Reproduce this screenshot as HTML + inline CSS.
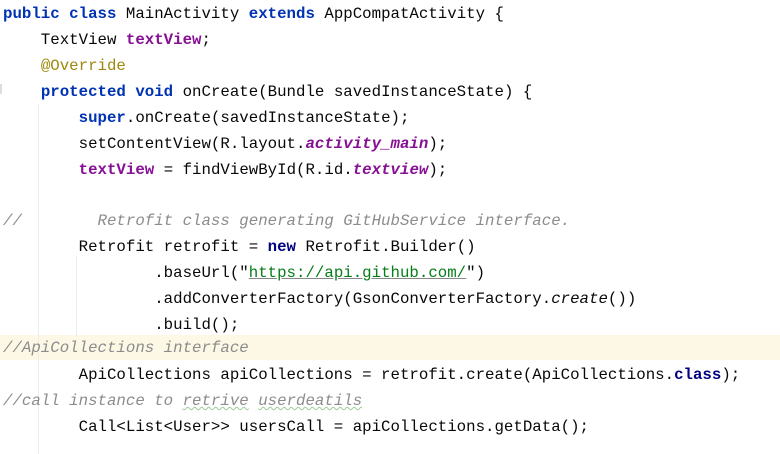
<!DOCTYPE html>
<html><head><style>
body{margin:0;width:780px;height:454px;background:#fff;position:relative;overflow:hidden;font-family:"Liberation Mono",monospace;font-size:15.75px;color:#080808}
.l{position:absolute;left:3px;white-space:pre;line-height:26px;height:26px}
.k{color:#0033b3;font-weight:bold}
.k2{color:#000080;font-weight:bold}
.f{color:#871094;font-weight:bold}
.fi{color:#871094;font-style:italic;font-weight:bold}
.a{color:#9e880d}
.c{color:#8c8c8c;font-style:italic}
.s{color:#067d17;text-decoration:underline;text-decoration-color:#888}
.i{font-style:italic}
.w{text-decoration:underline wavy #9c9;text-decoration-thickness:1px}
.g{position:absolute;width:1px;background:#ececec}
.hl{position:absolute;left:0;top:335px;width:780px;height:25px;background:#fdf8e6}
</style></head><body>
<div class="hl"></div>
<div class="g" style="left:38px;top:104px;height:350px"></div>
<div class="g" style="left:76px;top:256px;height:80px"></div>
<div class="g" style="left:0;top:84px;height:10px;background:#ddd;width:2px"></div>
<div class="l" style="top:1px"><span class="k">public class</span> MainActivity <span class="k">extends</span> AppCompatActivity {</div>
<div class="l" style="top:27px">    TextView <span class="f">textView</span>;</div>
<div class="l" style="top:53px">    <span class="a">@Override</span></div>
<div class="l" style="top:79px">    <span class="k">protected void</span> onCreate(Bundle savedInstanceState) {</div>
<div class="l" style="top:105px">        <span class="k">super</span>.onCreate(savedInstanceState);</div>
<div class="l" style="top:131px">        setContentView(R.layout.<span class="fi">activity_main</span>);</div>
<div class="l" style="top:157px">        <span class="f">textView</span> = findViewById(R.id.<span class="fi">textview</span>);</div>
<div class="l c" style="top:208px">//        Retrofit class generating GitHubService interface.</div>
<div class="l" style="top:234px">        Retrofit retrofit = <span class="k2">new</span> Retrofit.Builder()</div>
<div class="l" style="top:260px">                .baseUrl("<span class="s">https://api.github.com/</span>")</div>
<div class="l" style="top:286px">                .addConverterFactory(GsonConverterFactory.<span class="i">create</span>())</div>
<div class="l" style="top:312px">                .build();</div>
<div class="l c" style="top:335px">//ApiCollections interface</div>
<div class="l" style="top:362px">        ApiCollections apiCollections = retrofit.create(ApiCollections.<span class="k2">class</span>);</div>
<div class="l c" style="top:388px">//call instance to <span class="w">retrive</span> <span class="w">userdeatils</span></div>
<div class="l" style="top:414px">        Call&lt;List&lt;User&gt;&gt; usersCall = apiCollections.getData();</div>
</body></html>
